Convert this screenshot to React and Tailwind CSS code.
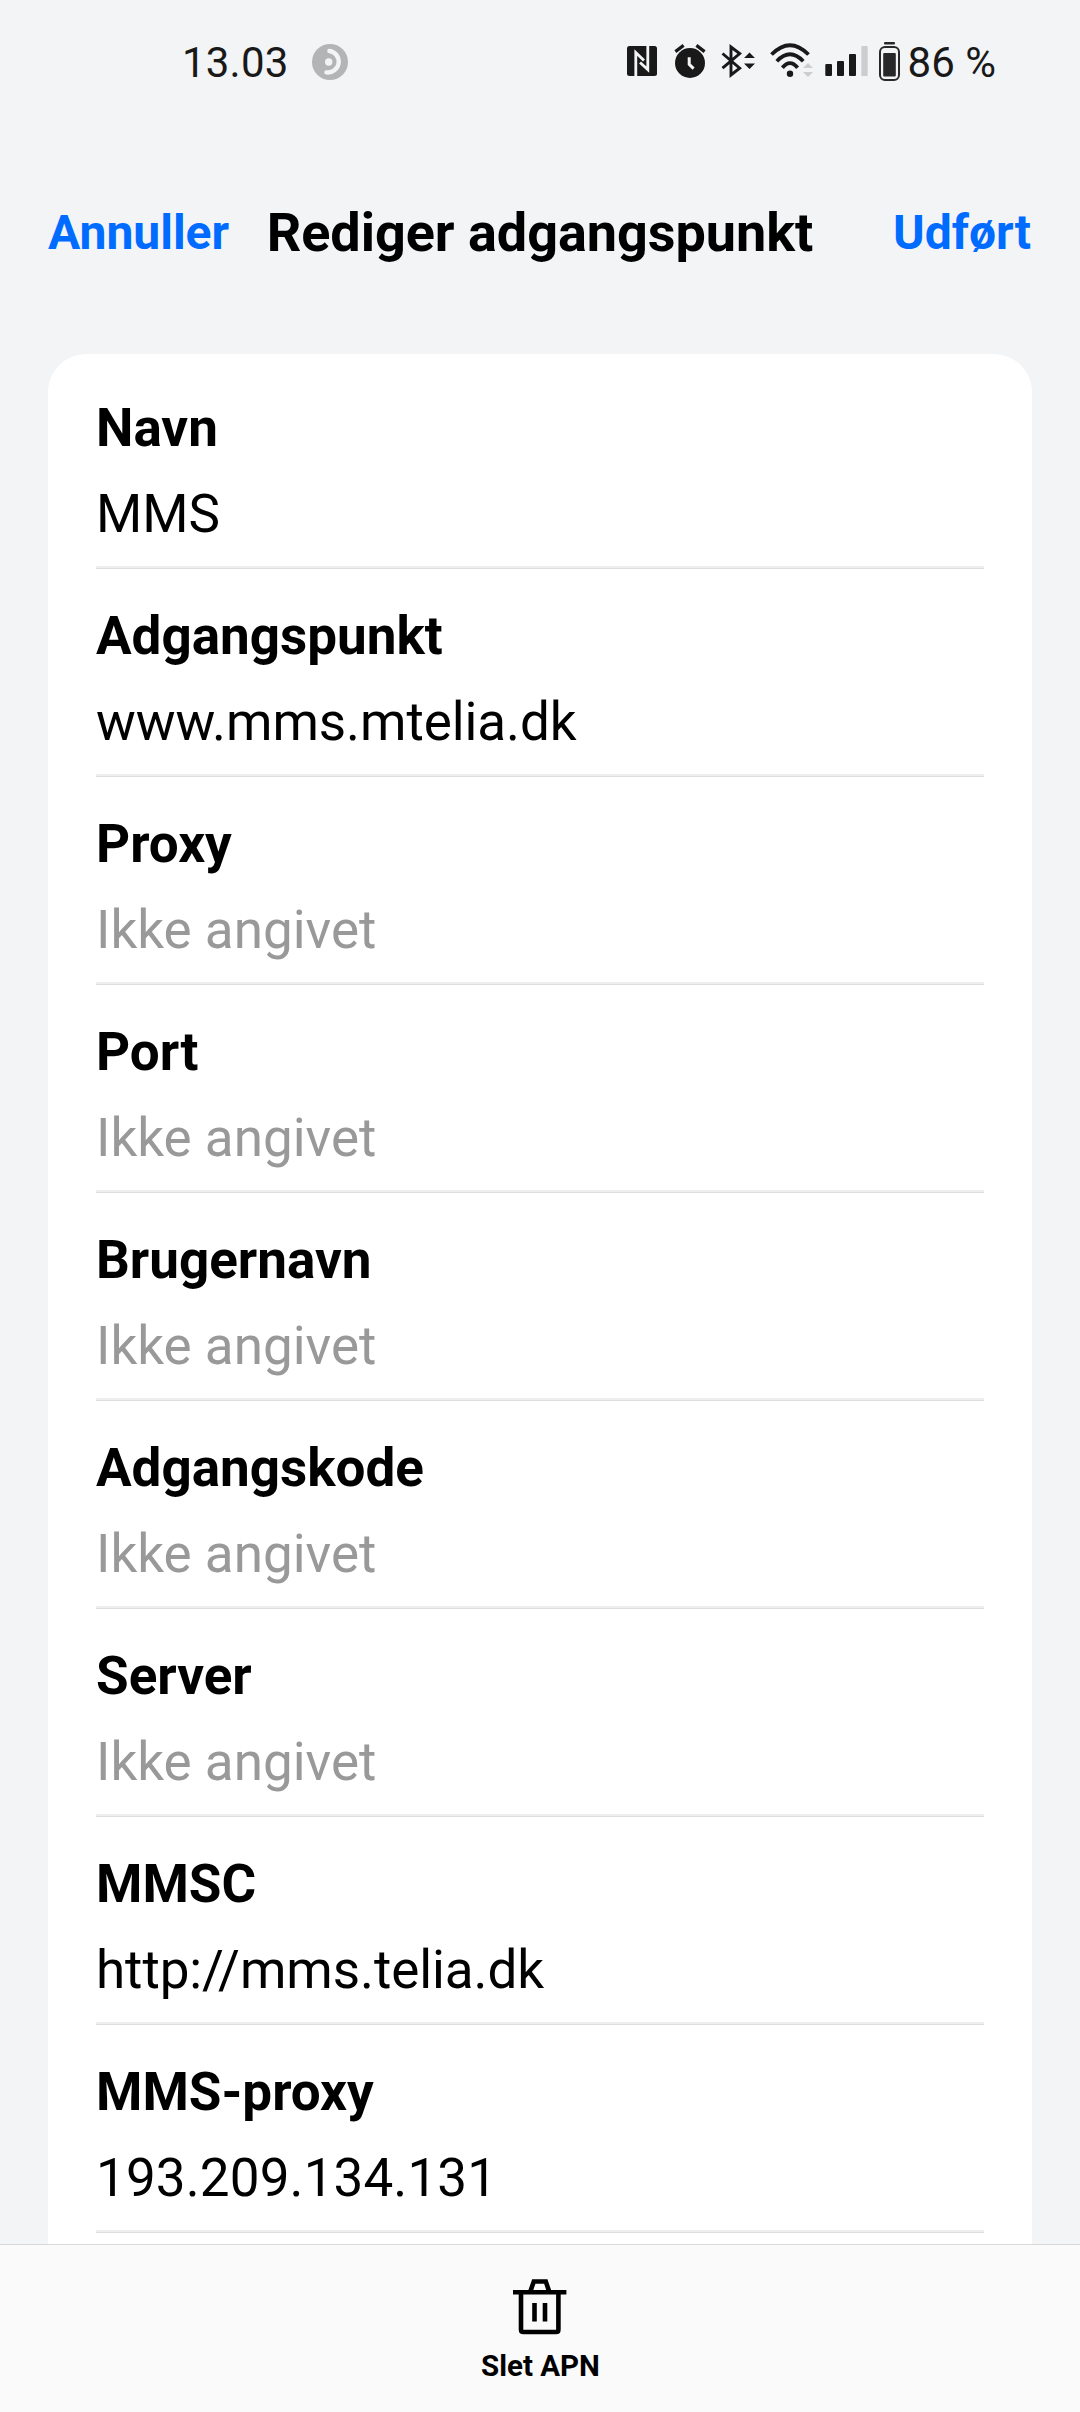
import clsx from 'clsx';

const fields = [
    { label: 'Navn', value: 'MMS' },
    { label: 'Adgangspunkt', value: 'www.mms.mtelia.dk' },
    { label: 'Proxy' },
    { label: 'Port' },
    { label: 'Brugernavn' },
    { label: 'Adgangskode' },
    { label: 'Server' },
    { label: 'MMSC', value: 'http://mms.telia.dk' },
    { label: 'MMS-proxy', value: '193.209.134.131', numeric: true },
];

const AppIcon = () => (
    <svg width="36" height="36" viewBox="0 0 36 36" className="mb-px ml-[23px]">
        <circle cx="18" cy="18" r="18" fill="#b3b4b6" />
        <circle cx="16.7" cy="18" r="3.7" fill="#f2f4f6" />
        <path d="M17.4 7 A10.8 10.8 0 0 1 14.4 28.4" fill="none" stroke="#f2f4f6" strokeWidth="4.4" strokeLinecap="round" />
    </svg>
);

const NfcIcon = () => (
    <svg width="30" height="30" viewBox="0 0 30 30" className="mb-[3px]">
        <rect width="30" height="30" rx="2.5" fill="#191919" />
        <path d="M8.8 30 V6.5 L17 14.5" fill="none" stroke="#f2f4f6" strokeWidth="2.8" />
        <path d="M20.8 0 V23.5 L13 16.5" fill="none" stroke="#f2f4f6" strokeWidth="2.8" />
    </svg>
);

const AlarmIcon = () => (
    <svg width="32" height="34" viewBox="0 0 32 34" className="mb-[3px] ml-[17px]">
        <circle cx="16" cy="19" r="15" fill="#191919" />
        <path d="M1.4 7.6 L9.6 1.4 M22.4 1.4 L30.6 7.6" stroke="#191919" strokeWidth="3.2" />
        <path d="M15.2 13.2 V20.4 L19.6 24.6" fill="none" stroke="#f2f4f6" strokeWidth="3" />
    </svg>
);

const BluetoothIcon = () => (
    <svg width="34" height="34" viewBox="0 0 34 34" className="mb-[3px] ml-[15px]">
        <path d="M1.5 9.5 L18.7 24.2 L10 31 V3 L18.7 9.6 L1.5 24.2" fill="none" stroke="#191919" strokeWidth="2.9" />
        <path d="M23 14 L28.5 8.4 L34 14 Z M23 19.4 L28.5 25 L34 19.4 Z" fill="#191919" />
    </svg>
);

const WifiIcon = () => (
    <svg width="44" height="36" viewBox="0 0 44 36" className="mb-[3px] ml-[15px]">
        <path d="M1.5 11.5 Q20 -7 38.5 11.5" fill="none" stroke="#191919" strokeWidth="3.8" />
        <path d="M6.8 18.3 Q20 4.2 33.2 18.3" fill="none" stroke="#191919" strokeWidth="3.8" />
        <path d="M12.4 24.7 Q20 15.6 27.6 24.7" fill="none" stroke="#191919" strokeWidth="3.8" />
        <circle cx="20" cy="30.7" r="3.2" fill="#191919" />
        <path d="M33 25 L38 20 L43 25 Z M33 29 L38 34 L43 29 Z" fill="#cccdcf" />
    </svg>
);

const SignalIcon = () => (
    <svg width="43" height="30" viewBox="0 0 43 30" className="mb-[3px] ml-[11px]">
        <rect x="0.3" y="18" width="6.7" height="12" rx="1" fill="#191919" />
        <rect x="12" y="15" width="7" height="15" rx="1" fill="#191919" />
        <rect x="24" y="8" width="7" height="22" rx="1" fill="#191919" />
        <rect x="36.3" y="0" width="6.4" height="30" rx="1" fill="#cccdcf" />
    </svg>
);

const BatteryIcon = () => (
    <svg width="21" height="39" viewBox="0 0 21 39" className="mb-[2px] ml-[11px]">
        <rect x="5" y="0" width="11" height="2.4" rx="1" fill="#28282a" />
        <rect x="1" y="5" width="19" height="33" rx="5" fill="none" stroke="#28282a" strokeWidth="2" />
        <rect x="4.2" y="11" width="12.6" height="23.6" rx="1" fill="#28282a" />
    </svg>
);

const TrashIcon = () => (
    <svg width="54" height="56" viewBox="0 0 54 56" fill="none" stroke="#000" strokeWidth="4.6">
        <path d="M0 13.2 H53.4" />
        <path d="M17.5 12 L20.8 2.5 H32.8 L36 12" />
        <path d="M8 13 V50.4 Q8 53 10.6 53 H43 Q45.4 53 45.4 50.4 V13" />
        <path d="M21.5 24 V42.6 M32 24 V42.6" />
    </svg>
);

const StatusBar = () => (
    <div className="flex h-[124px] items-center pl-[182px] pr-[84px] pt-px text-[42px] leading-[50px] text-[#191919]">
        <span className="tracking-[0.2px]">13.03</span>
        <AppIcon />
        <div className="ml-auto flex items-center">
            <NfcIcon />
            <AlarmIcon />
            <BluetoothIcon />
            <WifiIcon />
            <SignalIcon />
            <BatteryIcon />
            <span className="ml-2">86 %</span>
        </div>
    </div>
);

const Header = () => (
    <header className="grid h-[230px] grid-cols-[1fr_auto_1fr] items-start px-12 pt-[77px] font-bold leading-[64px]">
        <button className="justify-self-start text-[48px] text-[#006bff]">Annuller</button>
        <h1 className="text-[54px] tracking-[-0.05px] text-black">Rediger adgangspunkt</h1>
        <button className="mr-px justify-self-end text-[48px] text-[#006bff]">Udført</button>
    </header>
);

const Field = ({ label, value, numeric }) => (
    <div className="shrink-0 pt-[35px] text-[53px] leading-[64px]">
        <div className="font-bold text-black">{label}</div>
        <div
            className={clsx(
                'mt-[22px]',
                value ? 'text-black' : 'text-[#999999]',
                value && (numeric ? 'tracking-[0.12px]' : 'tracking-[-0.07px]')
            )}
        >
            {value || 'Ikke angivet'}
        </div>
        <div className="mt-5 h-[3px] border-b border-[#dedede] bg-[#eeeeee]" />
    </div>
);

const App = () => {
    return (
        <div className="flex h-[2412px] w-[1080px] flex-col overflow-hidden bg-[#f2f4f6] font-['Roboto',sans-serif]">
            <StatusBar />
            <Header />

            {/* Access point fields */}
            <main className="mx-12 flex min-h-0 flex-1 flex-col overflow-hidden rounded-t-[38px] bg-white px-12 pt-[7px]">
                {fields.map((field) => (
                    <Field key={field.label} {...field} />
                ))}
            </main>

            {/* Bottom action */}
            <footer className="flex h-[168px] shrink-0 flex-col items-center border-t border-[#d9d9d9] bg-[#fafafa] pt-[34px]">
                <TrashIcon />
                <span className="ml-px mt-[13px] text-[29.5px] font-bold leading-9 text-black">Slet APN</span>
            </footer>
        </div>
    );
};

export default App;
